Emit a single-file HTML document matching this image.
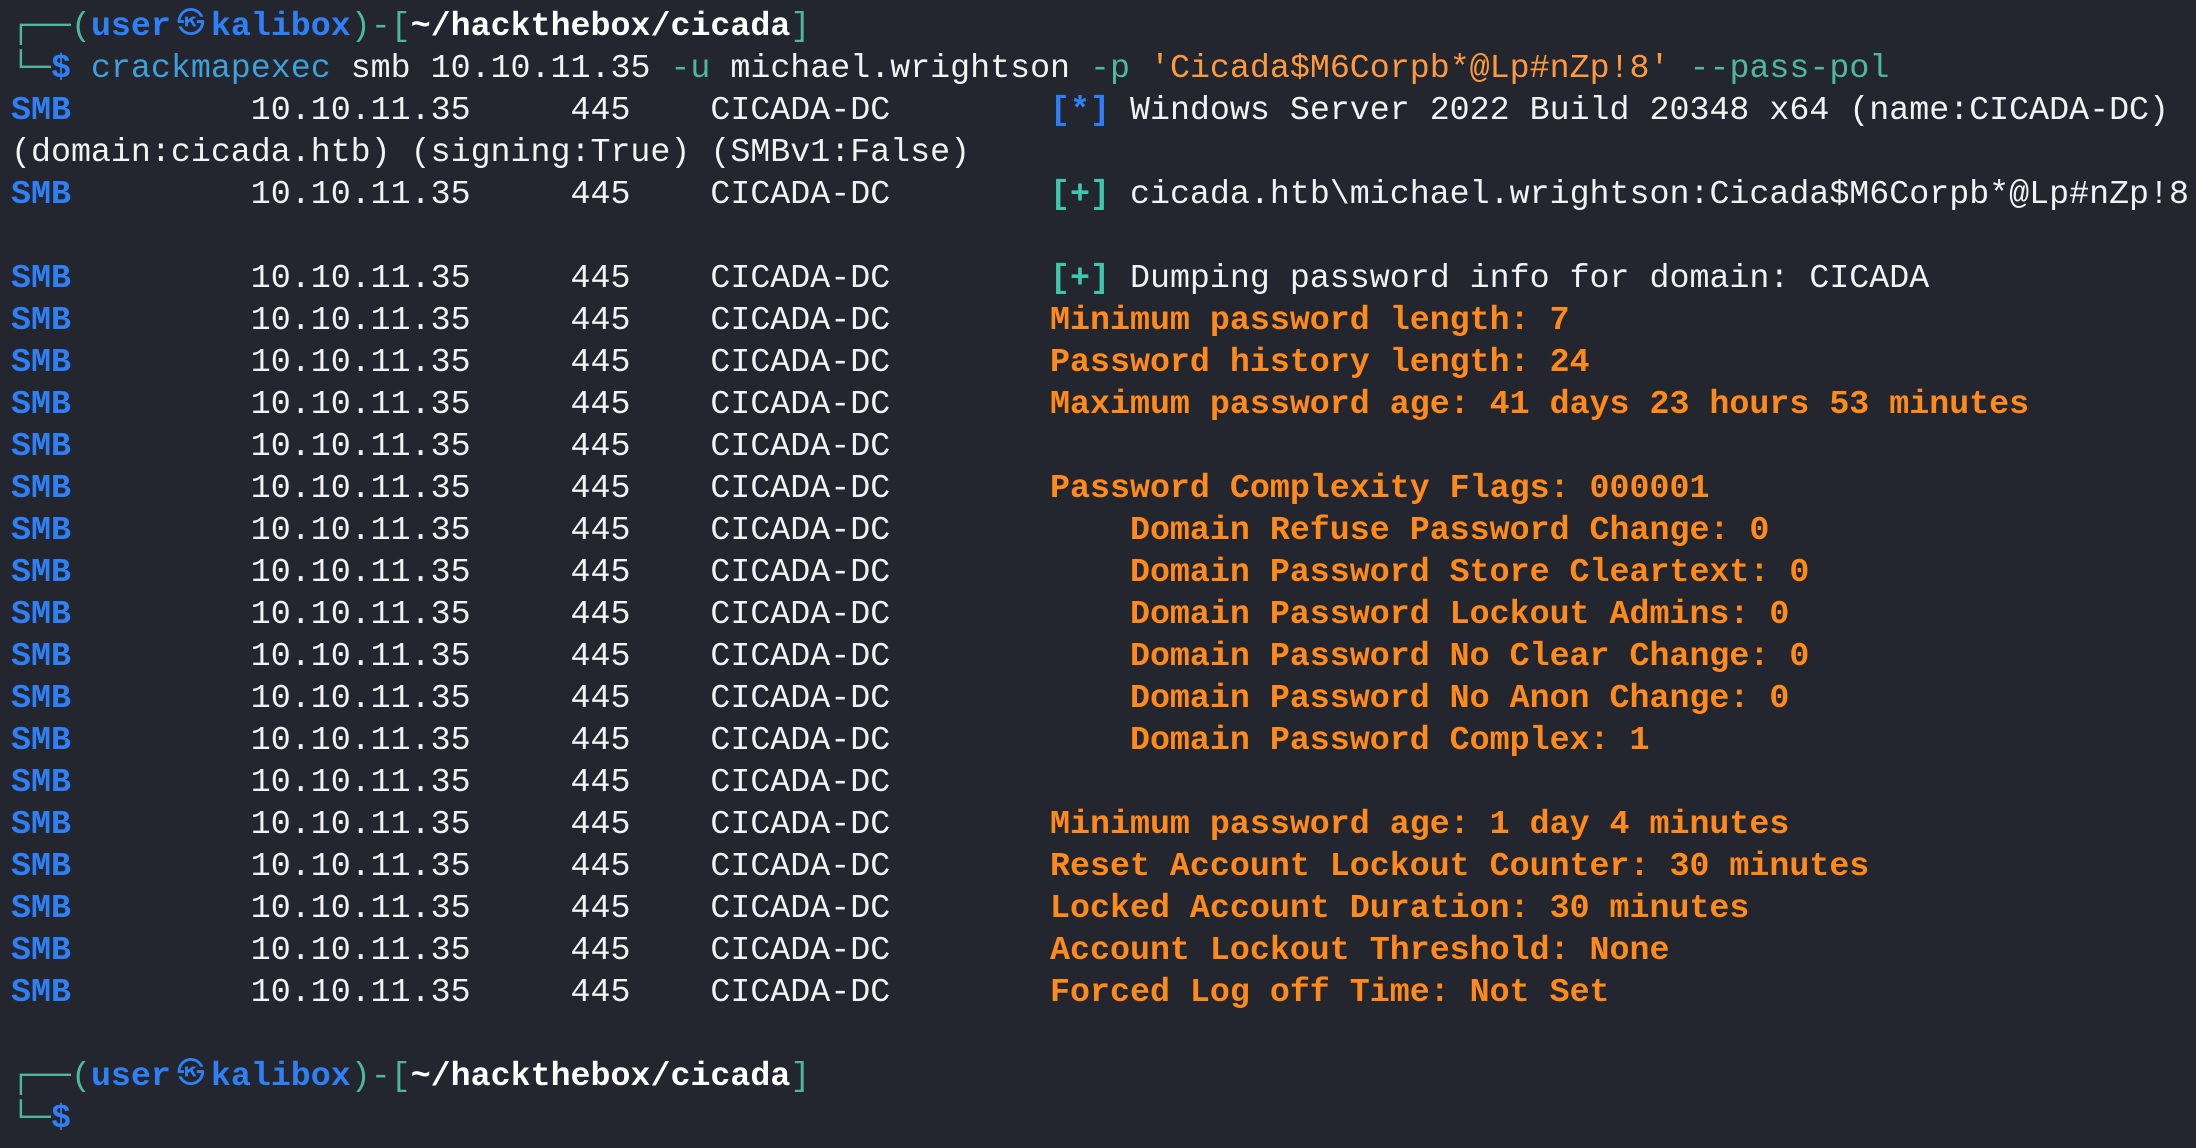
<!DOCTYPE html>
<html><head><meta charset="utf-8"><style>
html,body{margin:0;padding:0;background:#23252f;width:2196px;height:1148px;overflow:hidden}
pre{margin:0;position:absolute;left:11px;top:5px;font-family:"Liberation Mono","DejaVu Sans Mono",monospace;font-size:33.3px;line-height:42px;color:#f2f2f2;white-space:pre}
.t{color:#4fb7a0}.b{color:#2f7ff5;font-weight:bold}.w{color:#ffffff;font-weight:bold}
.c{color:#3ea0d8}.o{color:#ff9a3c}.O{color:#ff8a1c;font-weight:bold}.B{color:#2f7ff5;font-weight:bold}.g{color:#3fc7ab;font-weight:bold}
.k{display:inline-block;width:40px;text-align:center;font-size:28px;font-weight:normal;vertical-align:top}
</style></head><body><pre><span class="t">┌──(</span><span class="b">user<span class="k">㉿</span>kalibox</span><span class="t">)-[</span><span class="w">~/hackthebox/cicada</span><span class="t">]</span>
<span class="t">└─</span><span class="b">$</span> <span class="c">crackmapexec</span> smb 10.10.11.35 <span class="t">-u</span> michael.wrightson <span class="t">-p</span> <span class="o">'Cicada$M6Corpb*@Lp#nZp!8'</span> <span class="t">--pass-pol</span>
<span class="b">SMB</span>         10.10.11.35     445    CICADA-DC        <span class="B">[*]</span> Windows Server 2022 Build 20348 x64 (name:CICADA-DC)
(domain:cicada.htb) (signing:True) (SMBv1:False)
<span class="b">SMB</span>         10.10.11.35     445    CICADA-DC        <span class="g">[+]</span> cicada.htb\michael.wrightson:Cicada$M6Corpb*@Lp#nZp!8

<span class="b">SMB</span>         10.10.11.35     445    CICADA-DC        <span class="g">[+]</span> Dumping password info for domain: CICADA
<span class="b">SMB</span>         10.10.11.35     445    CICADA-DC        <span class="O">Minimum password length: 7</span>
<span class="b">SMB</span>         10.10.11.35     445    CICADA-DC        <span class="O">Password history length: 24</span>
<span class="b">SMB</span>         10.10.11.35     445    CICADA-DC        <span class="O">Maximum password age: 41 days 23 hours 53 minutes</span>
<span class="b">SMB</span>         10.10.11.35     445    CICADA-DC
<span class="b">SMB</span>         10.10.11.35     445    CICADA-DC        <span class="O">Password Complexity Flags: 000001</span>
<span class="b">SMB</span>         10.10.11.35     445    CICADA-DC            <span class="O">Domain Refuse Password Change: 0</span>
<span class="b">SMB</span>         10.10.11.35     445    CICADA-DC            <span class="O">Domain Password Store Cleartext: 0</span>
<span class="b">SMB</span>         10.10.11.35     445    CICADA-DC            <span class="O">Domain Password Lockout Admins: 0</span>
<span class="b">SMB</span>         10.10.11.35     445    CICADA-DC            <span class="O">Domain Password No Clear Change: 0</span>
<span class="b">SMB</span>         10.10.11.35     445    CICADA-DC            <span class="O">Domain Password No Anon Change: 0</span>
<span class="b">SMB</span>         10.10.11.35     445    CICADA-DC            <span class="O">Domain Password Complex: 1</span>
<span class="b">SMB</span>         10.10.11.35     445    CICADA-DC
<span class="b">SMB</span>         10.10.11.35     445    CICADA-DC        <span class="O">Minimum password age: 1 day 4 minutes</span>
<span class="b">SMB</span>         10.10.11.35     445    CICADA-DC        <span class="O">Reset Account Lockout Counter: 30 minutes</span>
<span class="b">SMB</span>         10.10.11.35     445    CICADA-DC        <span class="O">Locked Account Duration: 30 minutes</span>
<span class="b">SMB</span>         10.10.11.35     445    CICADA-DC        <span class="O">Account Lockout Threshold: None</span>
<span class="b">SMB</span>         10.10.11.35     445    CICADA-DC        <span class="O">Forced Log off Time: Not Set</span>

<span class="t">┌──(</span><span class="b">user<span class="k">㉿</span>kalibox</span><span class="t">)-[</span><span class="w">~/hackthebox/cicada</span><span class="t">]</span>
<span class="t">└─</span><span class="b">$</span> </pre></body></html>
